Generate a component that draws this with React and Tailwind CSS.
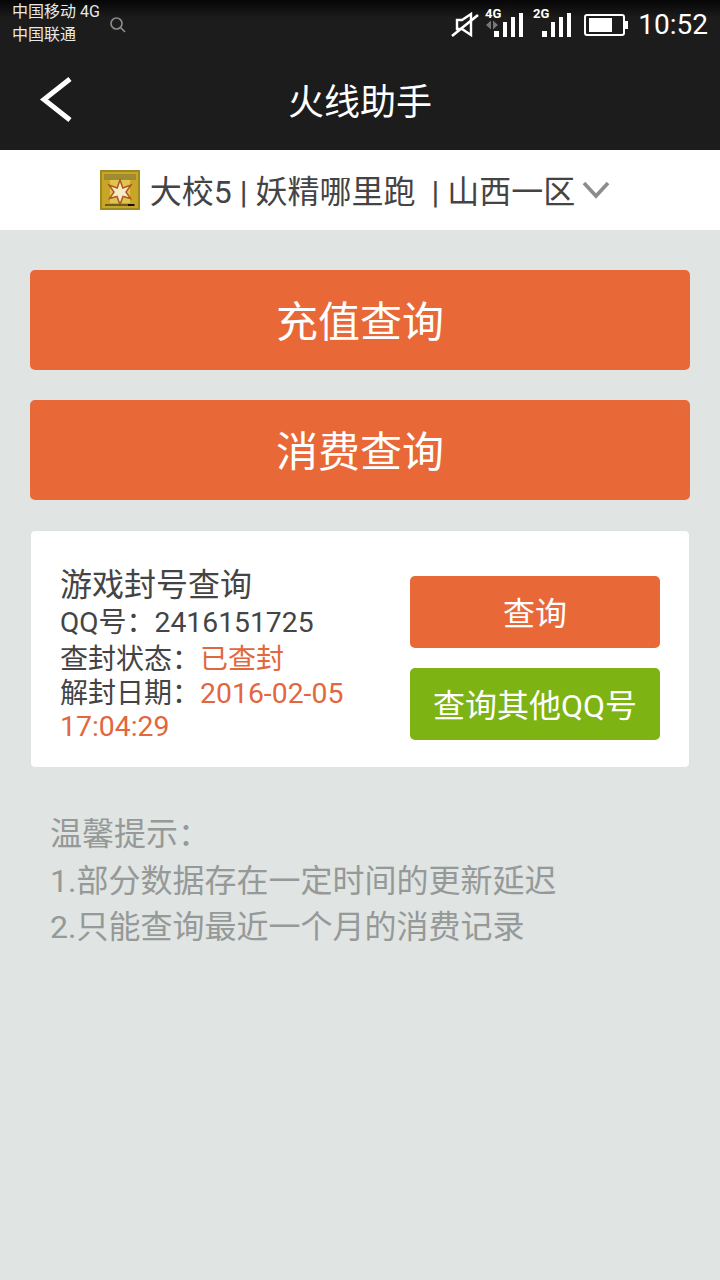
const font = 'font-["Roboto","Noto_Sans_CJK_SC",sans-serif]';

const Bars = () => (
  <path d="M10 22h5v6h-5zM19 13h4v15h-4zM27 8h4v20h-4zM35 4h4v24h-4z" fill="#fff" />
);

const StatusIcons = () => (
  <div className="flex items-center">
    <svg width="28" height="26" viewBox="0 0 28 26" className="mr-[5px]">
      <path d="M6 8h5l9-6v21l-9-6H6z" fill="none" stroke="#fff" strokeWidth="2.4" />
      <path d="M1 24 27 3" stroke="#fff" strokeWidth="2.6" />
    </svg>
    <svg width="40" height="32" viewBox="0 0 40 32" className="overflow-visible">
      <text x="1" y="9" fill="#fff" fontSize="13" fontWeight="700" fontFamily="Roboto">4G</text>
      <path d="M2 16l5-4.500v9zM9 11.500l5 4.500-5 4.500z" fill="#777" />
      <Bars />
    </svg>
    <svg width="40" height="32" viewBox="0 0 40 32" className="ml-[8px] overflow-visible">
      <text x="1" y="9" fill="#fff" fontSize="13" fontWeight="700" fontFamily="Roboto">2G</text>
      <Bars />
    </svg>
    <svg width="44" height="22" viewBox="0 0 44 22" className="ml-[12px]">
      <rect x="1" y="1" width="39" height="20" rx="2" fill="none" stroke="#fff" strokeWidth="2" />
      <rect x="5" y="4" width="23" height="14" fill="#fff" />
      <rect x="41" y="7" width="3" height="8" fill="#fff" />
    </svg>
  </div>
);

const OrangeBtn = ({ children }) => (
  <button className="h-[100px] w-full rounded-[5px] bg-[#e96838] pt-[4px] text-[42px] text-white">{children}</button>
);

export default function App() {
  return (
    <div className={`${font} flex min-h-[1280px] w-[720px] flex-col bg-[#e0e4e3]`}>
      <div className="h-[150px] bg-[#1c1c1c] bg-gradient-to-b from-[#070707] from-0% to-[#1c1c1c] to-[12%]">
        <div className="flex h-[50px] items-center justify-between pl-[12px] pr-[12px]">
          <div className="flex items-center">
            <div className="mb-[4px] text-[16px] leading-[23px] text-[#e8e8e8]">
              <div>中国移动 4G</div>
              <div>中国联通</div>
            </div>
            <svg width="18" height="18" viewBox="0 0 18 18" className="mb-[1px] ml-[9px]">
              <circle cx="7.5" cy="7.5" r="5.5" fill="none" stroke="#8a8a8a" strokeWidth="1.7" />
              <path d="M11.5 11.5 16 16" stroke="#8a8a8a" strokeWidth="1.7" />
            </svg>
          </div>
          <div className="flex items-center gap-[10px]">
            <StatusIcons />
            <span className="text-[28px] leading-none text-white">10:52</span>
          </div>
        </div>
        <div className="relative flex h-[100px] items-center justify-center">
          <svg width="34" height="46" viewBox="0 0 34 46" className="absolute left-[39px] top-[27px]">
            <path d="M31 2 5 22.5 31 43" fill="none" stroke="#fff" strokeWidth="5" />
          </svg>
          <span className="pt-[5px] text-[36px] text-white">火线助手</span>
        </div>
      </div>

      <div className="flex h-[80px] items-center justify-center bg-white pr-[10px] text-[32px] text-[#444]">
        <svg width="40" height="40" viewBox="0 0 40 40" className="mr-[10px]">
          <rect width="40" height="40" fill="#c9a52a" />
          <rect x="1" y="1" width="38" height="38" fill="none" stroke="#a08a1c" strokeWidth="2" />
          <path d="M4 4h32v6H4z" fill="#a08c30" />
          <path d="M10 10h20v23H10z" fill="#e0c450" />
          <path d="M20 10l2.800 8 8.200-3-5 7 4.500 6.500-7.500-2-3 8-3-8-7.500 2 4.500-6.500-5-7 8.200 3z" fill="#f4ecc8" stroke="#b0581e" strokeWidth="1.500" />
          <rect x="5" y="34" width="30" height="2" fill="#6a5e28" />
          <rect x="28" y="34" width="6" height="2" fill="#111" />
        </svg>
        <span className="whitespace-pre pt-[4px]">大校5 | 妖精哪里跑  | 山西一区</span>
        <svg width="28" height="18" viewBox="0 0 28 18" className="ml-[7px]">
          <path d="M2 2 14 15 26 2" fill="none" stroke="#8c8c8c" strokeWidth="3.600" />
        </svg>
      </div>

      <div className="flex flex-col gap-[30px] px-[30px] pt-[40px]">
        <OrangeBtn>充值查询</OrangeBtn>
        <OrangeBtn>消费查询</OrangeBtn>
        <div className="flex h-[238px] items-start justify-between rounded-[5px] border border-[#dfe3e2] bg-white pl-[29px] pr-[29px]">
          <div className="w-[300px] pt-[35px] text-[28px] leading-[35px] text-[#444]">
            <div className="text-[32px] leading-[38px]">游戏封号查询</div>
            <div className="pt-[1px]">QQ号：<span className="text-[28.3px]">2416151725</span></div>
            <div className="pt-[2px]">查封状态：<span className="text-[#e2673e]">已查封</span></div>
            <div className="leading-[33px]">解封日期：<span className="text-[28.4px] text-[#e2673e]">2016-02-05 17:04:29</span></div>
          </div>
          <div className="flex w-[250px] flex-col gap-[20px] pt-[45px]">
            <button className="h-[72px] rounded-[5px] bg-[#e96838] pt-[4px] text-[32px] text-white">查询</button>
            <button className="h-[72px] rounded-[5px] bg-[#7db313] pt-[4px] text-[32px] text-white">查询其他QQ号</button>
          </div>
        </div>
      </div>

      <div className="px-[50px] pt-[43px] text-[32px] leading-[46.5px] text-[#959998]">
        <div>温馨提示：</div>
        <div>1.部分数据存在一定时间的更新延迟</div>
        <div>2.只能查询最近一个月的消费记录</div>
      </div>
    </div>
  );
}
